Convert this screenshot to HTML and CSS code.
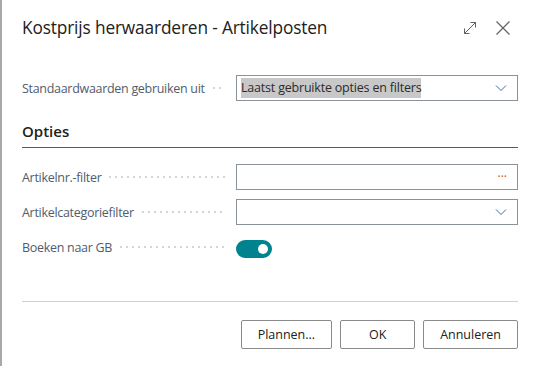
FILE: index.html
```html
<!DOCTYPE html>
<html lang="nl">
<head>
  <meta charset="UTF-8" />
  <title>Kostprijs herwaarderen - Artikelposten</title>
  <link rel="stylesheet" href="styles.css">
</head>
<body>
  <div class="dialog">
    <div class="dialog-head">
      <div class="dialog-title">Kostprijs herwaarderen - Artikelposten</div>
      <div class="head-actions">
        <svg class="icon" viewBox="0 0 16 16" width="16" height="16">
          <path d="M2.5 13.5 L13.5 2.5 M8.5 2.5 H13.5 V7.5 M2.5 8.5 V13.5 H7.5" fill="none" stroke="#616161" stroke-width="1"/>
        </svg>
        <svg class="icon" viewBox="0 0 16 16" width="16" height="16">
          <path d="M1.5 1.5 L14.5 14.5 M14.5 1.5 L1.5 14.5" fill="none" stroke="#616161" stroke-width="1.2"/>
        </svg>
      </div>
    </div>

    <div class="dialog-body">
      <div class="field">
        <div class="label"><span>Standaardwaarden gebruiken uit</span><i class="leader"></i></div>
        <div class="control select">
          <span class="selected-text">Laatst gebruikte opties en filters</span>
          <svg class="chev" viewBox="0 0 12 8" width="12" height="8"><path d="M1 1.5 L6 6.5 L11 1.5" fill="none" stroke="#3a6ea5" stroke-width="1"/></svg>
        </div>
      </div>

      <div class="group-title">Opties</div>

      <div class="field">
        <div class="label"><span>Artikelnr.-filter</span><i class="leader"></i></div>
        <div class="control"><span class="more">···</span></div>
      </div>
      <div class="field">
        <div class="label"><span>Artikelcategoriefilter</span><i class="leader"></i></div>
        <div class="control select">
          <span></span>
          <svg class="chev" viewBox="0 0 12 8" width="12" height="8"><path d="M1 1.5 L6 6.5 L11 1.5" fill="none" stroke="#3a6ea5" stroke-width="1"/></svg>
        </div>
      </div>
      <div class="field">
        <div class="label"><span>Boeken naar GB</span><i class="leader"></i></div>
        <div class="toggle-cell"><span class="toggle"><span class="knob"></span></span></div>
      </div>
    </div>

    <div class="dialog-foot">
      <button class="btn">Plannen...</button>
      <button class="btn btn-ok">OK</button>
      <button class="btn">Annuleren</button>
    </div>
  </div>
</body>
</html>
```

FILE: styles.css
```css
:root {
  --text: #212121;
  --label: #505c6d;
  --border: #8a929c;
  --teal: #00838f;
}
*, *::before, *::after { box-sizing: border-box; }
html, body { margin: 0; padding: 0; height: 100%; }
body {
  font-family: 'Open Sans', 'Noto Sans', sans-serif;
  background: #fff; color: var(--text);
}
.dialog {
  height: 100%;
  border-left: 2px solid #a8a8a8;
  padding: 0 23px 0 20px;
  display: flex; flex-direction: column;
}

.dialog-head {
  display: flex; align-items: center; justify-content: space-between;
  height: 54px; padding-top: 1px;
}
.dialog-title { font-size: 17.3px; font-weight: 500; letter-spacing: -0.15px; }
.head-actions { display: flex; gap: 17px; margin-right: 7px; }
.icon { display: block; }

.dialog-body { padding-top: 21px; }

.field {
  display: grid; grid-template-columns: 214px 1fr;
  align-items: center; margin-bottom: 9px;
}
.label {
  display: flex; align-items: center;
  font-size: 12.5px; letter-spacing: -0.3px; color: var(--label); padding-right: 11px;
}
.leader {
  flex: 1; margin-left: 6px; height: 2px;
  background-image: radial-gradient(circle, #d2d5d9 0.8px, transparent 1px);
  background-size: 6px 2px; background-repeat: repeat-x;
}
.control {
  height: 26px; border: 1px solid var(--border);
  display: flex; align-items: center; justify-content: space-between;
  padding: 0 10px 0 4px; font-size: 12.5px; letter-spacing: -0.2px;
}
.selected-text { background: #c8c8c8; color: #2b2b2b; padding: 1px 0 2px; }
.chev { display: block; }
.control .more {
  margin-left: auto; color: #c8501e; font-size: 12px; letter-spacing: 0; line-height: 1;
}

.group-title {
  font-size: 15px; font-weight: 600; color: var(--text); line-height: 20px;
  padding: 11px 0 6px; margin-bottom: 16px;
  border-bottom: 1px solid #505c6d;
}

.toggle-cell { display: flex; align-items: center; height: 26px; padding-top: 3px; }
.toggle {
  width: 36px; height: 18px; border-radius: 9px;
  background: var(--teal); display: flex; align-items: center; justify-content: flex-end;
  padding-right: 4px;
}
.knob { width: 10px; height: 10px; border-radius: 50%; background: #fff; }

.dialog-foot {
  margin-top: 32px; padding-top: 18px;
  border-top: 1px solid #d0d0d0;
  display: flex; justify-content: flex-end; gap: 8px;
}
.btn {
  height: 29px; min-width: 75px; padding: 0 16px;
  background: #fff; border: 1px solid #8a8a8a; border-radius: 2px;
  font-family: inherit; font-size: 12.5px; color: var(--text);
}
.btn-ok { width: 75px; }
```
